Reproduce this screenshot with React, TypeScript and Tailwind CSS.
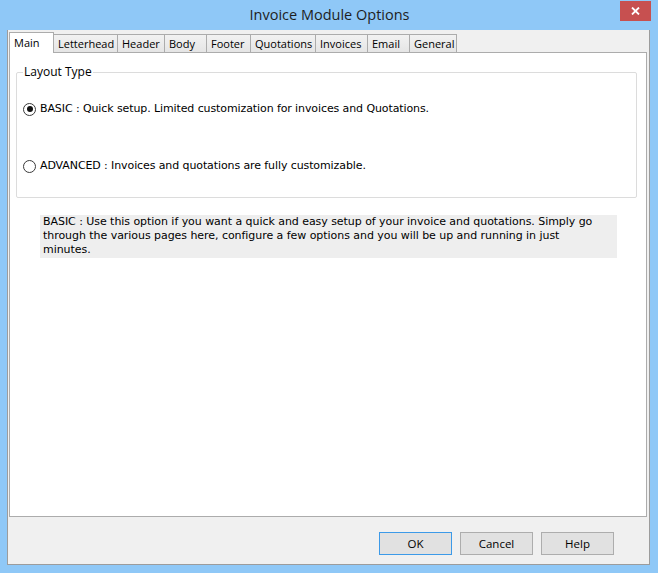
import React from 'react';

const uiFont = { fontFamily: '"Open Sans", "Noto Sans", sans-serif' };
const dlgFont = { fontFamily: '"DejaVu Sans", Verdana, sans-serif' };

const tabs = [
  { label: 'Main', w: 'w-[45px]' },
  { label: 'Letterhead', w: 'w-[64px]' },
  { label: 'Header', w: 'w-[47px]' },
  { label: 'Body', w: 'w-[42px]' },
  { label: 'Footer', w: 'w-[44px]' },
  { label: 'Quotations', w: 'w-[65px]' },
  { label: 'Invoices', w: 'w-[52px]' },
  { label: 'Email', w: 'w-[42px]' },
  { label: 'General', w: 'w-[47px]' },
];

function Radio({ checked, label }: { checked?: boolean; label: string }) {
  return (
    <div className="flex items-center h-[16px]">
      <span className="w-[13px] h-[13px] rounded-full border border-[#3a3a3a] bg-white flex items-center justify-center">
        {checked && <span className="w-[6px] h-[6px] rounded-full bg-[#111]" />}
      </span>
      <span className="ml-[4px] text-[11px] tracking-[-0.1px] text-black whitespace-nowrap" style={dlgFont}>
        {label}
      </span>
    </div>
  );
}

function Btn({ label, primary }: { label: string; primary?: boolean }) {
  return (
    <button
      className={`w-[73px] h-[23px] bg-[#e1e1e1] border text-[11.5px] text-black ${
        primary ? 'border-[#3c9ae8]' : 'border-[#adadad]'
      }`}
      style={uiFont}
    >
      {label}
    </button>
  );
}

export default function App() {
  return (
    <div className="w-[658px] h-[573px] bg-[#8fc8f7] flex flex-col pl-[7px] pr-[8px] pb-[8px]">
      {/* Title bar */}
      <div className="relative h-[30px] flex items-center justify-center">
        <span className="text-[14.5px] text-[#1e1e1e] ml-[2px]" style={uiFont}>
          Invoice Module Options
        </span>
        <div className="absolute -right-[1px] top-[1px] w-[31px] h-[20px] bg-[#c75050] flex items-center justify-center">
          <svg width="9" height="8" viewBox="0 0 9 8">
            <path d="M1 0.5 L8 7.5 M8 0.5 L1 7.5" stroke="#fff" strokeWidth="1.8" />
          </svg>
        </div>
      </div>

      {/* Client area */}
      <div className="flex-1 bg-[#f0f0f0] border-l border-r border-b border-[#9c9c9c] flex flex-col">
        {/* Tabs */}
        <div className="flex items-end h-[22px] pt-[2px] pl-[1px]">
          {tabs.map((t, i) =>
            i === 0 ? (
              <div
                key={t.label}
                className={`${t.w} h-[21px] -mb-[1px] relative z-10 bg-white border-l border-t border-r border-[#acacac] pl-[4px] pt-[2px] text-[11px] text-black leading-[15px]`}
                style={uiFont}
              >
                {t.label}
              </div>
            ) : (
              <div
                key={t.label}
                className={`${t.w} h-[18px] bg-gradient-to-b from-[#f2f2f2] to-[#e5e5e5] border-t border-r border-[#acacac] pl-[4px] pt-[1px] text-[11px] text-black leading-[16px]`}
                style={uiFont}
              >
                {t.label}
              </div>
            )
          )}
        </div>

        {/* Tab panel */}
        <div className="ml-[1px] mr-[2px] h-[465px] bg-white border border-[#acacac] flex flex-col">
          <fieldset className="mt-[11px] ml-[6px] mr-[9px] h-[134px] border border-[#dcdcdc] rounded-[2px] px-[6px]">
            <legend className="pl-[1px] pr-[1px] text-[12px] leading-[16px] text-black" style={uiFont}>
              Layout Type
            </legend>
            <div className="mt-[21px] flex flex-col gap-[41px]">
              <Radio checked label="BASIC : Quick setup. Limited customization for invoices and Quotations." />
              <Radio label="ADVANCED : Invoices and quotations are fully customizable." />
            </div>
          </fieldset>

          <div
            className="mt-[17px] ml-[30px] w-[577px] h-[43px] bg-[#eeeeee] pl-[3px] text-[11px] tracking-[-0.05px] leading-[14px] text-black whitespace-nowrap"
            style={dlgFont}
          >
            BASIC : Use this option if you want a quick and easy setup of your invoice and quotations. Simply go
            <br />
            through the various pages here, configure a few options and you will be up and running in just
            <br />
            minutes.
          </div>
        </div>

        {/* Buttons */}
        <div className="flex justify-end gap-[8px] pr-[35px] pt-[15px]">
          <Btn label="OK" primary />
          <Btn label="Cancel" />
          <Btn label="Help" />
        </div>
      </div>
    </div>
  );
}
